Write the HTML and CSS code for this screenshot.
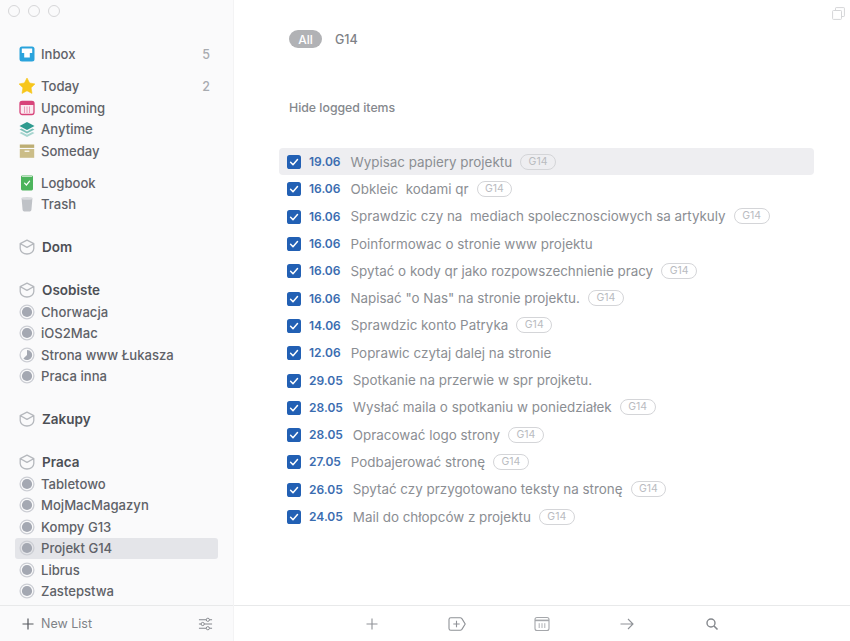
FILE: index.html
```html
<!DOCTYPE html>
<html lang="pl">
<head>
<meta charset="utf-8">
<title>Projekt G14</title>
<link rel="stylesheet" href="styles.css">
</head>
<body>
<svg class="defs" width="0" height="0" aria-hidden="true">
  <symbol id="box" viewBox="0 0 16 16"><path d="M8 1.2 14.8 4.6V9.6C14.8 12.8 11.6 15 8 15S1.2 12.8 1.2 9.6V4.6ZM1.4 4.8 8 8.4 14.6 4.8" fill="none" stroke="#b5b8bd" stroke-width="1.3" stroke-linejoin="round"/></symbol>
  <symbol id="full" viewBox="0 0 16 16"><circle cx="8" cy="8" r="6.9" fill="none" stroke="#ccced4" stroke-width="1.3"/><circle cx="8" cy="8" r="5.1" fill="#a4a8b2"/></symbol>
  <symbol id="part" viewBox="0 0 16 16"><circle cx="8" cy="8" r="6.9" fill="none" stroke="#ccced4" stroke-width="1.3"/><path d="M8 2.9A5.1 5.1 0 1 1 4.4 11.6L8 8Z" fill="#a4a8b2"/></symbol>
  <symbol id="chk" viewBox="0 0 14 14"><rect width="14" height="14" rx="2.6" fill="#2260b4"/><path d="M3.6 7.2 6 9.7 10.5 4.6" fill="none" stroke="#fff" stroke-width="1.5" stroke-linecap="round" stroke-linejoin="round"/></symbol>
</svg>
<div class="app">
  <aside class="sidebar">
    <div class="lights"><span class="light"></span><span class="light"></span><span class="light"></span></div>
    <nav class="lists">
      <div class="group">
        <div class="row"><svg class="ico" viewBox="0 0 16 16"><rect x=".5" y=".5" width="15" height="15" rx="2.5" fill="#2aa3dc"/><path d="M2.8 2.6H13.2V7H10.8V11.6H5.2V7H2.8Z" fill="#fff"/></svg><span class="name">Inbox</span><span class="count">5</span></div>
      </div>
      <div class="group">
        <div class="row"><svg class="ico" viewBox="0 0 16 16"><path d="M8 0 10.6 5 16 5.9 12.1 9.8 13 15.4 8 12.8 3 15.4 3.9 9.8 0 5.9 5.4 5Z" fill="#f7c61b" stroke="#f7c61b" stroke-width=".6" stroke-linejoin="round"/></svg><span class="name">Today</span><span class="count">2</span></div>
        <div class="row"><svg class="ico" viewBox="0 0 16 16"><rect x="1" y="1.5" width="14" height="13" rx="2.2" fill="#fbeaf0" stroke="#d8447a" stroke-width="1.3"/><path d="M1 2.8Q1 1.5 3 1.5H13Q15 1.5 15 2.8V5H1Z" fill="#d8447a"/><path d="M5.5 6.5V13M8 6.5V13M10.5 6.5V13" stroke="#eb9ab8" stroke-width="1"/></svg><span class="name">Upcoming</span></div>
        <div class="row"><svg class="ico" viewBox="0 0 16 16"><path d="M8 1 15.5 5 8 9 .5 5Z" fill="#2f9b8f"/><path d="M2.6 7.5.5 8.6 8 12.6 15.5 8.6 13.4 7.5 8 10.4Z" fill="#7cc0b8"/><path d="M2.6 10.9.5 12 8 16 15.5 12 13.4 10.9 8 13.8Z" fill="#a6d5cf"/></svg><span class="name">Anytime</span></div>
        <div class="row"><svg class="ico" viewBox="0 0 16 16"><rect x=".8" y="1.5" width="14.4" height="3.4" fill="#bdae74"/><rect x=".8" y="6" width="14.4" height="8.8" fill="#cbbd88"/><rect x="5.6" y="7.6" width="4.8" height="1.2" fill="#fff"/></svg><span class="name">Someday</span></div>
      </div>
      <div class="group">
        <div class="row"><svg class="ico" viewBox="0 0 16 16"><rect x="2" y=".6" width="12" height="14.8" rx="1.4" fill="#4cb45c"/><path d="M3 1.4H13" stroke="#cfe9d2" stroke-width="1"/><path d="M5.6 8.2 7.4 10 10.6 6.2" fill="none" stroke="#fff" stroke-width="1.2" stroke-linecap="round"/></svg><span class="name">Logbook</span></div>
        <div class="row"><svg class="ico" viewBox="0 0 16 16"><path d="M2.6 2.4H13.4L12.4 14Q12.2 15.4 10.8 15.4H5.2Q3.8 15.4 3.6 14Z" fill="#bfc2c7"/><ellipse cx="8" cy="2.4" rx="5.6" ry="1.4" fill="#d9dbde"/></svg><span class="name">Trash</span></div>
      </div>
      <div class="area">
        <div class="row"><svg class="ico"><use href="#box"/></svg><span class="name head">Dom</span></div>
      </div>
      <div class="area">
        <div class="row"><svg class="ico"><use href="#box"/></svg><span class="name head">Osobiste</span></div>
        <div class="row"><svg class="ico"><use href="#full"/></svg><span class="name">Chorwacja</span></div>
        <div class="row"><svg class="ico"><use href="#full"/></svg><span class="name">iOS2Mac</span></div>
        <div class="row"><svg class="ico"><use href="#part"/></svg><span class="name">Strona www Łukasza</span></div>
        <div class="row"><svg class="ico"><use href="#full"/></svg><span class="name">Praca inna</span></div>
      </div>
      <div class="area">
        <div class="row"><svg class="ico"><use href="#box"/></svg><span class="name head">Zakupy</span></div>
      </div>
      <div class="area">
        <div class="row"><svg class="ico"><use href="#box"/></svg><span class="name head">Praca</span></div>
        <div class="row"><svg class="ico"><use href="#full"/></svg><span class="name">Tabletowo</span></div>
        <div class="row"><svg class="ico"><use href="#full"/></svg><span class="name">MojMacMagazyn</span></div>
        <div class="row"><svg class="ico"><use href="#full"/></svg><span class="name">Kompy G13</span></div>
        <div class="row selected"><svg class="ico"><use href="#full"/></svg><span class="name">Projekt G14</span></div>
        <div class="row"><svg class="ico"><use href="#full"/></svg><span class="name">Librus</span></div>
        <div class="row"><svg class="ico"><use href="#full"/></svg><span class="name">Zastepstwa</span></div>
      </div>
    </nav>
    <footer class="side-foot">
      <svg class="new-plus" viewBox="0 0 12 12"><path d="M6 .5V11.5M.5 6H11.5" stroke="#55585e" stroke-width="1.2"/></svg>
      <span class="new-list">New List</span>
      <svg class="sliders" viewBox="0 0 16 14"><path d="M1 2.5H15M1 7H15M1 11.5H15" stroke="#85888e" stroke-width="1.1"/><circle cx="10.5" cy="2.5" r="1.7" fill="#fafbfb" stroke="#85888e"/><circle cx="5" cy="7" r="1.7" fill="#fafbfb" stroke="#85888e"/><circle cx="10.5" cy="11.5" r="1.7" fill="#fafbfb" stroke="#85888e"/></svg>
    </footer>
  </aside>
  <main class="main">
    <svg class="copy" viewBox="0 0 13 13"><path d="M3.5 3.5V1.2Q3.5.6 4.1.6H11.8Q12.4.6 12.4 1.2V8.9Q12.4 9.5 11.8 9.5H9.5" fill="none" stroke="#d5d6d8"/><rect x=".6" y="3.5" width="8.9" height="8.9" rx=".8" fill="none" stroke="#d5d6d8"/></svg>
    <div class="filters"><span class="pill">All</span><span class="filter">G14</span></div>
    <div class="hide">Hide logged items</div>
    <ul class="tasks">
      <li class="task active"><svg class="check"><use href="#chk"/></svg><span class="date">19.06</span><span class="title">Wypisac papiery projektu</span><span class="tag">G14</span></li>
      <li class="task"><svg class="check"><use href="#chk"/></svg><span class="date">16.06</span><span class="title">Obkleic&nbsp; kodami qr</span><span class="tag">G14</span></li>
      <li class="task"><svg class="check"><use href="#chk"/></svg><span class="date">16.06</span><span class="title">Sprawdzic czy na&nbsp; mediach spolecznosciowych sa artykuly</span><span class="tag">G14</span></li>
      <li class="task"><svg class="check"><use href="#chk"/></svg><span class="date">16.06</span><span class="title">Poinformowac o stronie www projektu</span></li>
      <li class="task"><svg class="check"><use href="#chk"/></svg><span class="date">16.06</span><span class="title">Spytać o kody qr jako rozpowszechnienie pracy</span><span class="tag">G14</span></li>
      <li class="task"><svg class="check"><use href="#chk"/></svg><span class="date">16.06</span><span class="title">Napisać "o Nas" na stronie projektu.</span><span class="tag">G14</span></li>
      <li class="task"><svg class="check"><use href="#chk"/></svg><span class="date">14.06</span><span class="title">Sprawdzic konto Patryka</span><span class="tag">G14</span></li>
      <li class="task"><svg class="check"><use href="#chk"/></svg><span class="date">12.06</span><span class="title">Poprawic czytaj dalej na stronie</span></li>
      <li class="task"><svg class="check"><use href="#chk"/></svg><span class="date">29.05</span><span class="title">Spotkanie na przerwie w spr projketu.</span></li>
      <li class="task"><svg class="check"><use href="#chk"/></svg><span class="date">28.05</span><span class="title">Wysłać maila o spotkaniu w poniedziałek</span><span class="tag">G14</span></li>
      <li class="task"><svg class="check"><use href="#chk"/></svg><span class="date">28.05</span><span class="title">Opracować logo strony</span><span class="tag">G14</span></li>
      <li class="task"><svg class="check"><use href="#chk"/></svg><span class="date">27.05</span><span class="title">Podbajerować stronę</span><span class="tag">G14</span></li>
      <li class="task"><svg class="check"><use href="#chk"/></svg><span class="date">26.05</span><span class="title">Spytać czy przygotowano teksty na stronę</span><span class="tag">G14</span></li>
      <li class="task"><svg class="check"><use href="#chk"/></svg><span class="date">24.05</span><span class="title">Mail do chłopców z projektu</span><span class="tag">G14</span></li>
    </ul>
    <footer class="toolbar">
      <svg class="tool" viewBox="0 0 16 16"><path d="M8 2.5V13.5M2.5 8H13.5" stroke="#8f9297" stroke-width="1.1"/></svg>
      <svg class="tool" viewBox="0 0 18 16"><path d="M2.8 1.8H12.2Q13.2 1.8 13.9 2.6L17.2 8 13.9 13.4Q13.2 14.2 12.2 14.2H2.8Q1 14.2 1 12.4V3.6Q1 1.8 2.8 1.8Z" fill="none" stroke="#8f9297" stroke-width="1.1"/><path d="M8.5 4.8V11.2M5.3 8H11.7" stroke="#8f9297" stroke-width="1.1"/></svg>
      <svg class="tool" viewBox="0 0 16 16"><rect x="1" y="1.5" width="14" height="13" rx="2" fill="none" stroke="#a5a7ab" stroke-width="1.1"/><path d="M1 4.4H15" stroke="#a5a7ab" stroke-width="1.6"/><path d="M5.2 7.2V12M8 7.2V12M10.8 7.2V12" stroke="#a5a7ab" stroke-width=".9"/></svg>
      <svg class="tool" viewBox="0 0 16 16"><path d="M1.5 8H14M9 3 14 8 9 13" fill="none" stroke="#8f9297" stroke-width="1.1"/></svg>
      <svg class="tool" viewBox="0 0 16 16"><circle cx="7" cy="7" r="4" fill="none" stroke="#85888d" stroke-width="1.4"/><path d="M10 10 13.5 13.5" stroke="#85888d" stroke-width="1.6"/></svg>
    </footer>
  </main>
</div>
</body>
</html>
```

FILE: styles.css
```css
* { box-sizing: border-box; }
html, body { margin: 0; height: 100%; }
body { font-family: Inter, "Noto Sans", sans-serif; background: #fff; overflow: hidden; }
.defs { position: absolute; }

.app { display: flex; height: 641px; }

.sidebar {
  width: 234px;
  flex: none;
  display: flex;
  flex-direction: column;
  background: #fafafb;
  border-right: 1px solid #f3f3f4;
}
.lights { display: flex; gap: 8px; padding: 5px 0 0 8px; height: 43.5px; flex: none; }
.light { width: 12px; height: 12px; border-radius: 50%; border: 1px solid #d6d6d8; }

.lists { flex: 1; min-height: 0; overflow: hidden; padding: 0 15px; }
.group + .group { margin-top: 10.5px; }
.area { margin-top: 21.5px; }
.group + .area { margin-top: 21.5px; }

.row {
  display: flex;
  align-items: center;
  height: 21.5px;
  padding: 0 8px 0 4px;
  border-radius: 3px;
  font-size: 13.1px;
  font-weight: 500;
  color: #5f6268;
}
.row.selected { background: #e4e5e9; }
.ico { width: 16px; height: 16px; flex: none; margin-right: 6px; }
.name { flex: 1; white-space: nowrap; }
.name.head { font-weight: 600; font-size: 13.5px; padding-left: 1px; color: #4c4f55; }
.count { color: #a8abb0; font-size: 12.5px; font-weight: 500; }

.side-foot {
  height: 36px;
  flex: none;
  display: flex;
  align-items: center;
  padding: 0 20px 0 22px;
  border-top: 1px solid #e8e9ea;
}
.new-plus { width: 12px; height: 12px; margin-right: 7px; }
.new-list { flex: 1; font-size: 12.5px; font-weight: 400; color: #7f8287; }
.sliders { width: 15px; height: 14px; }

.main { flex: 1; min-width: 0; display: flex; flex-direction: column; position: relative; }
.copy { position: absolute; top: 7px; right: 5px; width: 13px; height: 13px; }
.filters { display: flex; align-items: center; gap: 13px; padding: 30px 0 0 55px; height: 48px; flex: none; }
.pill {
  width: 33px;
  height: 18px;
  display: flex;
  align-items: center;
  justify-content: center;
  border-radius: 9px;
  background: #b1b2b5;
  color: #fff;
  font-size: 12px;
  font-weight: 500;
}
.filter { font-size: 12.5px; font-weight: 500; color: #7e8186; }
.hide { margin: 51px 0 0 55px; height: 17px; line-height: 17px; font-size: 12.3px; font-weight: 500; color: #85888d; flex: none; }

.tasks { list-style: none; margin: 32px 0 0 45px; padding: 0; width: 535px; flex: 1; }
.task {
  display: flex;
  align-items: center;
  height: 27.3px;
  padding-left: 8px;
  border-radius: 4px;
  white-space: nowrap;
}
.task.active { background: #eeeef1; }
.check { width: 14px; height: 14px; flex: none; margin-right: 8px; position: relative; top: .5px; }
.date { font-size: 12px; font-weight: 600; color: #3a6cb0; margin-right: 10px; }
.title { font-size: 13.4px; color: #8b8e93; }
.tag {
  margin-left: 8px;
  padding: 0 7.5px;
  height: 16px;
  line-height: 14px;
  border: 1px solid #d4d5d8;
  border-radius: 8px;
  font-size: 10.5px;
  color: #b9bbbf;
}

.toolbar {
  height: 36px;
  flex: none;
  display: flex;
  align-items: center;
  justify-content: space-between;
  padding: 0 130px;
  border-top: 1px solid #e8e9ea;
}
.tool { width: 16px; height: 16px; }
.tool:nth-child(2) { width: 18px; margin: 0 -1px; }
```
